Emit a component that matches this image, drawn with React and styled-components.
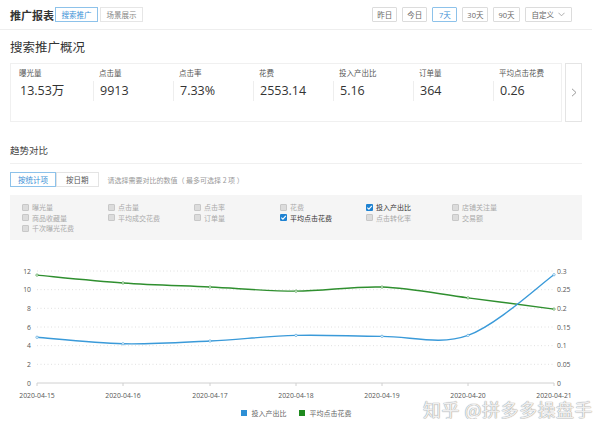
import React from 'react';
import styled, { createGlobalStyle } from 'styled-components';

const GlobalStyle = createGlobalStyle`
  body {
    margin: 0;
    background: #fff;
    font-family: "Noto Sans CJK SC", "Noto Sans", sans-serif;
    color: #333;
  }
`;

const metrics = [
  { label: '曝光量', value: '13.53万' },
  { label: '点击量', value: '9913' },
  { label: '点击率', value: '7.33%' },
  { label: '花费', value: '2553.14' },
  { label: '投入产出比', value: '5.16' },
  { label: '订单量', value: '364' },
  { label: '平均点击花费', value: '0.26' },
];

const options = [
  ['曝光量', false], ['点击量', false], ['点击率', false], ['花费', false], ['投入产出比', true], ['店铺关注量', false],
  ['商品收藏量', false], ['平均成交花费', false], ['订单量', false], ['平均点击花费', true], ['点击转化率', false], ['交易额', false],
  ['千次曝光花费', false],
];

const xs = [37, 123, 210, 296, 382, 468, 554];
const dates = ['2020-04-15', '2020-04-16', '2020-04-17', '2020-04-18', '2020-04-19', '2020-04-20', '2020-04-21'];
const roi = [4.9, 4.2, 4.5, 5.1, 5.0, 5.1, 11.6];
const cpc = [0.289, 0.268, 0.257, 0.246, 0.257, 0.228, 0.198];
const BASE = 381;
const TOP = 269;

const roiPts = roi.map((v, i) => [xs[i], BASE - (v * (BASE - TOP)) / 12]);
const cpcPts = cpc.map((v, i) => [xs[i], BASE - (v * (BASE - TOP)) / 0.3]);

function smoothPath(pts) {
  let d = `M${pts[0][0]},${pts[0][1]}`;
  for (let i = 0; i < pts.length - 1; i++) {
    const p0 = pts[i - 1] || pts[i];
    const p1 = pts[i];
    const p2 = pts[i + 1];
    const p3 = pts[i + 2] || p2;
    const c1 = [p1[0] + (p2[0] - p0[0]) / 6, p1[1] + (p2[1] - p0[1]) / 6];
    const c2 = [p2[0] - (p3[0] - p1[0]) / 6, p2[1] - (p3[1] - p1[1]) / 6];
    d += ` C${c1[0]},${c1[1]} ${c2[0]},${c2[1]} ${p2[0]},${p2[1]}`;
  }
  return d;
}

const App = () => {
  const ticks = [0, 1, 2, 3, 4, 5, 6];
  return (
    <Page>
      <GlobalStyle />
      <Header>
        <HeaderLeft>
          <Title>推广报表</Title>
          <Tabs>
            <Tab active>搜索推广</Tab>
            <Tab>场景展示</Tab>
          </Tabs>
        </HeaderLeft>
        <RangeGroup>
          <RangeBtn>昨日</RangeBtn>
          <RangeBtn>今日</RangeBtn>
          <RangeBtn active>7天</RangeBtn>
          <RangeBtn>30天</RangeBtn>
          <RangeBtn>90天</RangeBtn>
          <RangeBtn wide>
            自定义
            <Chevron viewBox="0 0 8 5">
              <path d="M0.5 0.5 L4 4 L7.5 0.5" fill="none" stroke="#999" strokeWidth="0.9" />
            </Chevron>
          </RangeBtn>
        </RangeGroup>
      </Header>

      <SectionTitle>搜索推广概况</SectionTitle>

      <MetricRow>
        <MetricCard>
          {metrics.map((m, i) => (
            <Metric key={m.label}>
              <MetricLabel>{m.label}</MetricLabel>
              <MetricValue first={i === 0}>{m.value}</MetricValue>
            </Metric>
          ))}
        </MetricCard>
        <NextBtn>
          <svg width="6" height="9" viewBox="0 0 6 9">
            <path d="M1 0.8 L5 4.5 L1 8.2" fill="none" stroke="#999" strokeWidth="1" />
          </svg>
        </NextBtn>
      </MetricRow>

      <SubTitle>趋势对比</SubTitle>

      <ToggleRow>
        <Toggle>
          <ToggleBtn active>按统计项</ToggleBtn>
          <ToggleBtn>按日期</ToggleBtn>
        </Toggle>
        <Hint>请选择需要对比的数值（ 最多可选择 2 项 ）</Hint>
      </ToggleRow>

      <OptionPanel>
        {options.map(([name, checked]) => (
          <Option key={name} checked={checked}>
            <Box checked={checked}>
              {checked && (
                <svg width="7" height="7" viewBox="0 0 7 7">
                  <path d="M1.3 3.6 L2.9 5.1 L5.8 1.8" fill="none" stroke="#fff" strokeWidth="1.1" />
                </svg>
              )}
            </Box>
            {name}
          </Option>
        ))}
      </OptionPanel>

      <ChartWrap>
        <svg width="572" height="150" viewBox="10 255 572 150">
          {ticks.slice(1).map((t) => {
            const y = BASE - (t * (BASE - TOP)) / 6;
            return (
              <line key={t} x1="37" x2="554" y1={y} y2={y} stroke="#d8d8d8" strokeWidth="0.8" strokeDasharray="1 2.5" />
            );
          })}
          <line x1="37" x2="554" y1={BASE} y2={BASE} stroke="#d0d0d0" strokeWidth="1" />
          {xs.map((x) => (
            <line key={x} x1={x} x2={x} y1={BASE} y2={BASE + 3} stroke="#d0d0d0" strokeWidth="1" />
          ))}
          {ticks.map((t) => {
            const y = BASE - (t * (BASE - TOP)) / 6;
            return (
              <g key={t}>
                <AxisText x="31" y={y + 2.5} textAnchor="end">{t * 2}</AxisText>
                <AxisText x="557" y={y + 2.5}>{t === 0 ? '0' : (t * 0.05).toFixed(2).replace(/0$/, '')}</AxisText>
              </g>
            );
          })}
          {dates.map((d, i) => (
            <AxisText key={d} x={xs[i]} y="396" textAnchor="middle">{d}</AxisText>
          ))}
          <path d={smoothPath(cpcPts)} fill="none" stroke="#2f8f2f" strokeWidth="1.4" />
          <path d={smoothPath(roiPts)} fill="none" stroke="#3a9ad9" strokeWidth="1.4" />
          {cpcPts.map(([x, y]) => (
            <circle key={'g' + x} cx={x} cy={y} r="1.2" fill="#fff" stroke="#2f8f2f" strokeWidth="0.6" />
          ))}
          {roiPts.map(([x, y]) => (
            <circle key={'b' + x} cx={x} cy={y} r="1.2" fill="#fff" stroke="#3a9ad9" strokeWidth="0.6" />
          ))}
        </svg>
        <Legend>
          <LegendItem>
            <Swatch color="#2d8fd5" />
            投入产出比
          </LegendItem>
          <LegendItem>
            <Swatch color="#1f8a1f" />
            平均点击花费
          </LegendItem>
        </Legend>
        <Watermark>知乎 @拼多多操盘手</Watermark>
      </ChartWrap>
    </Page>
  );
};

export default App;

const Page = styled.div`
  padding: 0 18px 0 10px;
  width: 572px;
`;

const Header = styled.div`
  display: flex;
  align-items: center;
  justify-content: space-between;
  height: 29px;
  margin: 0 -10px;
  padding: 0 10px;
  border-bottom: 1px solid #eeeeee;
`;

const HeaderLeft = styled.div`
  display: flex;
  align-items: center;
`;

const Title = styled.div`
  font-size: 11px;
  font-weight: bold;
  color: #333;
  width: 45px;
`;

const Tabs = styled.div`
  display: flex;
`;

const Tab = styled.div`
  width: 43px;
  height: 15px;
  box-sizing: border-box;
  display: flex;
  align-items: center;
  justify-content: center;
  font-size: 7.5px;
  color: ${(p) => (p.active ? '#3a8fd6' : '#888')};
  border: 1px solid ${(p) => (p.active ? '#8dc2ea' : '#e6e6e6')};
  margin-right: 2px;
`;

const RangeGroup = styled.div`
  display: flex;
  gap: 5px;
  margin-right: 10px;
`;

const RangeBtn = styled.div`
  min-width: 25px;
  height: 15px;
  box-sizing: border-box;
  padding: 0 ${(p) => (p.wide ? '6px' : '4px')};
  display: flex;
  align-items: center;
  justify-content: center;
  gap: 4px;
  font-size: 7.5px;
  font-family: "Open Sans", "Noto Sans CJK SC", sans-serif;
  color: ${(p) => (p.active ? '#3a8fd6' : '#666')};
  border: 1px solid ${(p) => (p.active ? '#8dc2ea' : '#dcdcdc')};
  border-radius: 1px;
`;

const Chevron = styled.svg`
  width: 7px;
  height: 5px;
`;

const SectionTitle = styled.div`
  margin-top: 8px;
  height: 18px;
  line-height: 18px;
  font-size: 12.5px;
  color: #333;
`;

const MetricRow = styled.div`
  display: flex;
  gap: 3px;
  margin-top: 7px;
  height: 59px;
`;

const MetricCard = styled.div`
  flex: 1;
  display: grid;
  grid-template-columns: repeat(7, 80px);
  padding: 4px 0 0 8px;
  border: 1px solid #f0f0f0;
  overflow: hidden;
`;

const Metric = styled.div`
  display: flex;
  flex-direction: column;
`;

const MetricLabel = styled.div`
  font-size: 7.5px;
  line-height: 10px;
  color: #555;
`;

const MetricValue = styled.div`
  margin-top: 3px;
  margin-left: -6px;
  padding-left: 6px;
  line-height: 20px;
  font-size: 12.5px;
  font-family: "Open Sans", "Noto Sans CJK SC", sans-serif;
  color: #333;
  border-left: 1px solid ${(p) => (p.first ? 'transparent' : '#eeeeee')};
`;

const NextBtn = styled.div`
  width: 17px;
  box-sizing: border-box;
  border: 1px solid #e4e4e4;
  display: flex;
  align-items: center;
  justify-content: center;
`;

const SubTitle = styled.div`
  margin-top: 21px;
  line-height: 14px;
  font-size: 9.5px;
  color: #444;
  padding-bottom: 6px;
  border-bottom: 1px solid #f0f0f0;
`;

const ToggleRow = styled.div`
  display: flex;
  align-items: center;
  margin-top: 8px;
`;

const Toggle = styled.div`
  display: flex;
  margin-right: 9px;
`;

const ToggleBtn = styled.div`
  height: 15px;
  box-sizing: border-box;
  padding: 0 ${(p) => (p.active ? '7px' : '9px')};
  display: flex;
  align-items: center;
  font-size: 7.5px;
  color: ${(p) => (p.active ? '#3a8fd6' : '#555')};
  border: 1px solid ${(p) => (p.active ? '#8dc2ea' : '#e4e4e4')};
`;

const Hint = styled.div`
  font-size: 7px;
  color: #999;
`;

const OptionPanel = styled.div`
  margin-top: 8px;
  background: #f5f5f5;
  padding: 7px 12px 6px;
  display: grid;
  grid-template-columns: repeat(6, 86px);
  grid-auto-rows: 10.5px;
`;

const Option = styled.div`
  display: flex;
  align-items: center;
  gap: 3px;
  font-size: 7px;
  color: ${(p) => (p.checked ? '#333' : '#aaa')};
  white-space: nowrap;
`;

const Box = styled.div`
  width: 7px;
  height: 7px;
  box-sizing: border-box;
  display: flex;
  background: ${(p) => (p.checked ? '#1e82d2' : '#dcdcdc')};
  border: ${(p) => (p.checked ? 'none' : '1px solid #c8c8c8')};
  border-radius: 1px;
`;

const ChartWrap = styled.div`
  position: relative;
  margin-top: 17px;
  svg {
    display: block;
  }
`;

const AxisText = styled.text`
  font-size: 6.8px;
  font-family: "Open Sans", "Noto Sans", sans-serif;
  fill: #555;
`;

const Legend = styled.div`
  display: flex;
  justify-content: center;
  gap: 12px;
  line-height: 12px;
`;

const LegendItem = styled.div`
  display: flex;
  align-items: center;
  gap: 5px;
  font-size: 7px;
  color: #666;
`;

const Swatch = styled.span`
  width: 6px;
  height: 6px;
  background: ${(p) => p.color};
`;

const Watermark = styled.div`
  position: absolute;
  left: 413px;
  top: 139px;
  font-size: 18px;
  letter-spacing: 0.5px;
  color: rgba(255, 255, 255, 0.85);
  text-shadow: 0 0 1px #9a9a9a, 0 0 1px #9a9a9a;
  white-space: nowrap;
`;
